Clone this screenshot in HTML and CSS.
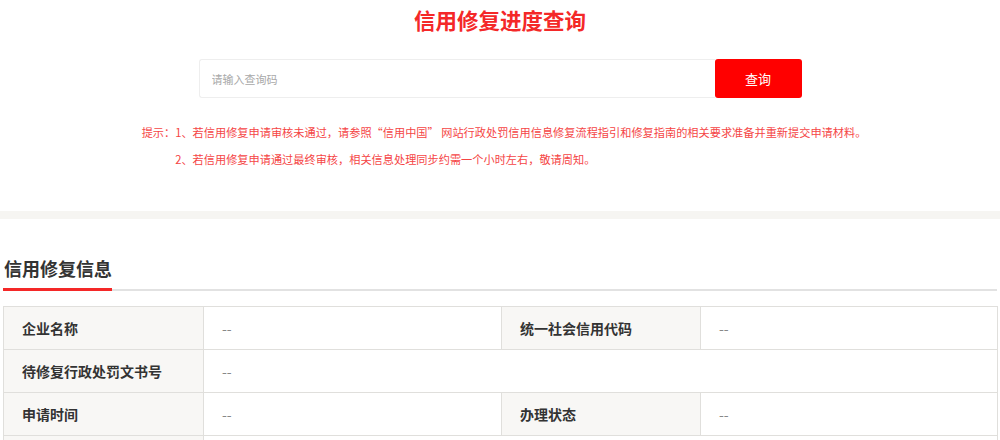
FILE: index.html
```html
<!DOCTYPE html>
<html lang="zh-CN">
<head>
    <meta charset="UTF-8">
    <meta name="viewport" content="width=device-width, initial-scale=1.0">
    <title>信用修复进度查询</title>
    <link rel="stylesheet" href="styles.css">
</head>
<body>
    <div class="query-top">
        <h1 class="query-title">信用修复进度查询</h1>
        <form class="search-bar" onsubmit="event.preventDefault();">
            <input type="text" class="search-input" placeholder="请输入查询码">
            <button type="submit" class="search-btn">查询</button>
        </form>
        <div class="tips-wrap">
            <div class="tips">
                <span class="tips-label">提示：</span>
                <div class="tips-lines">
                    <p>1、若信用修复申请审核未通过，请参照“信用中国” 网站行政处罚信用信息修复流程指引和修复指南的相关要求准备并重新提交申请材料。</p>
                    <p>2、若信用修复申请通过最终审核，相关信息处理同步约需一个小时左右，敬请周知。</p>
                </div>
            </div>
        </div>
    </div>
    <div class="band"></div>
    <div class="info">
        <div class="info-head">
            <h2 class="info-title">信用修复信息</h2>
        </div>
        <table class="info-table">
            <colgroup>
                <col class="col-label">
                <col class="col-value">
                <col class="col-label2">
                <col class="col-value2">
            </colgroup>
            <tr>
                <th>企业名称</th>
                <td>--</td>
                <th>统一社会信用代码</th>
                <td>--</td>
            </tr>
            <tr>
                <th>待修复行政处罚文书号</th>
                <td colspan="3">--</td>
            </tr>
            <tr>
                <th>申请时间</th>
                <td>--</td>
                <th>办理状态</th>
                <td>--</td>
            </tr>
            <tr>
                <th></th>
                <td colspan="3"></td>
            </tr>
        </table>
    </div>
</body>
</html>
```

FILE: styles.css
```css
body {
    margin: 0;
    font-family: "Noto Sans CJK SC", "Noto Sans", sans-serif;
    background: #fff;
    color: #333;
}
.query-top {
    padding-top: 6px;
}
.query-title {
    margin: 0;
    text-align: center;
    font-size: 21.5px;
    line-height: 28px;
    font-weight: bold;
    color: #f42828;
}
.search-bar {
    display: flex;
    justify-content: center;
    margin-top: 25px;
}
.search-input {
    width: 516px;
    height: 39px;
    box-sizing: border-box;
    padding: 0 12px;
    border: 1px solid #eeeeee;
    border-right: none;
    border-radius: 3px 0 0 3px;
    font-family: inherit;
    font-size: 11px;
    outline: none;
}
.search-input::placeholder {
    color: #a8a8a8;
}
.search-btn {
    width: 87px;
    height: 39px;
    border: none;
    border-radius: 3px;
    background: #ff0000;
    color: #fff;
    font-family: inherit;
    font-size: 13px;
    cursor: pointer;
}
.tips-wrap {
    display: flex;
    justify-content: center;
    margin-top: 21px;
    padding-left: 8px;
}
.tips {
    display: flex;
    font-size: 11.2px;
    line-height: 27px;
    color: #f54545;
}
.tips-lines p {
    margin: 0;
}
.band {
    height: 8px;
    margin-top: 38px;
    background: #f6f5f2;
}
.info {
    padding: 0 3px;
}
.info-head {
    margin-top: 36px;
    border-bottom: 2px solid #e2e2e2;
    height: 34px;
}
.info-title {
    display: inline-block;
    margin: 0;
    padding-left: 1px;
    font-size: 18px;
    line-height: 26px;
    font-weight: bold;
    color: #333;
    height: 33px;
    border-bottom: 3px solid #f42828;
}
.info-table {
    width: 994px;
    margin-top: 15px;
    border-collapse: collapse;
    table-layout: fixed;
}
.col-label {
    width: 200px;
}
.col-value {
    width: 298px;
}
.col-label2 {
    width: 199px;
}
.col-value2 {
    width: 297px;
}
.info-table th,
.info-table td {
    height: 42px;
    border: 1px solid #e0dfdc;
    font-size: 14px;
    text-align: left;
    padding: 0 18px;
}
.info-table th {
    background: #f8f7f5;
    font-weight: bold;
    color: #333;
}
.info-table td {
    color: #888;
}
```
